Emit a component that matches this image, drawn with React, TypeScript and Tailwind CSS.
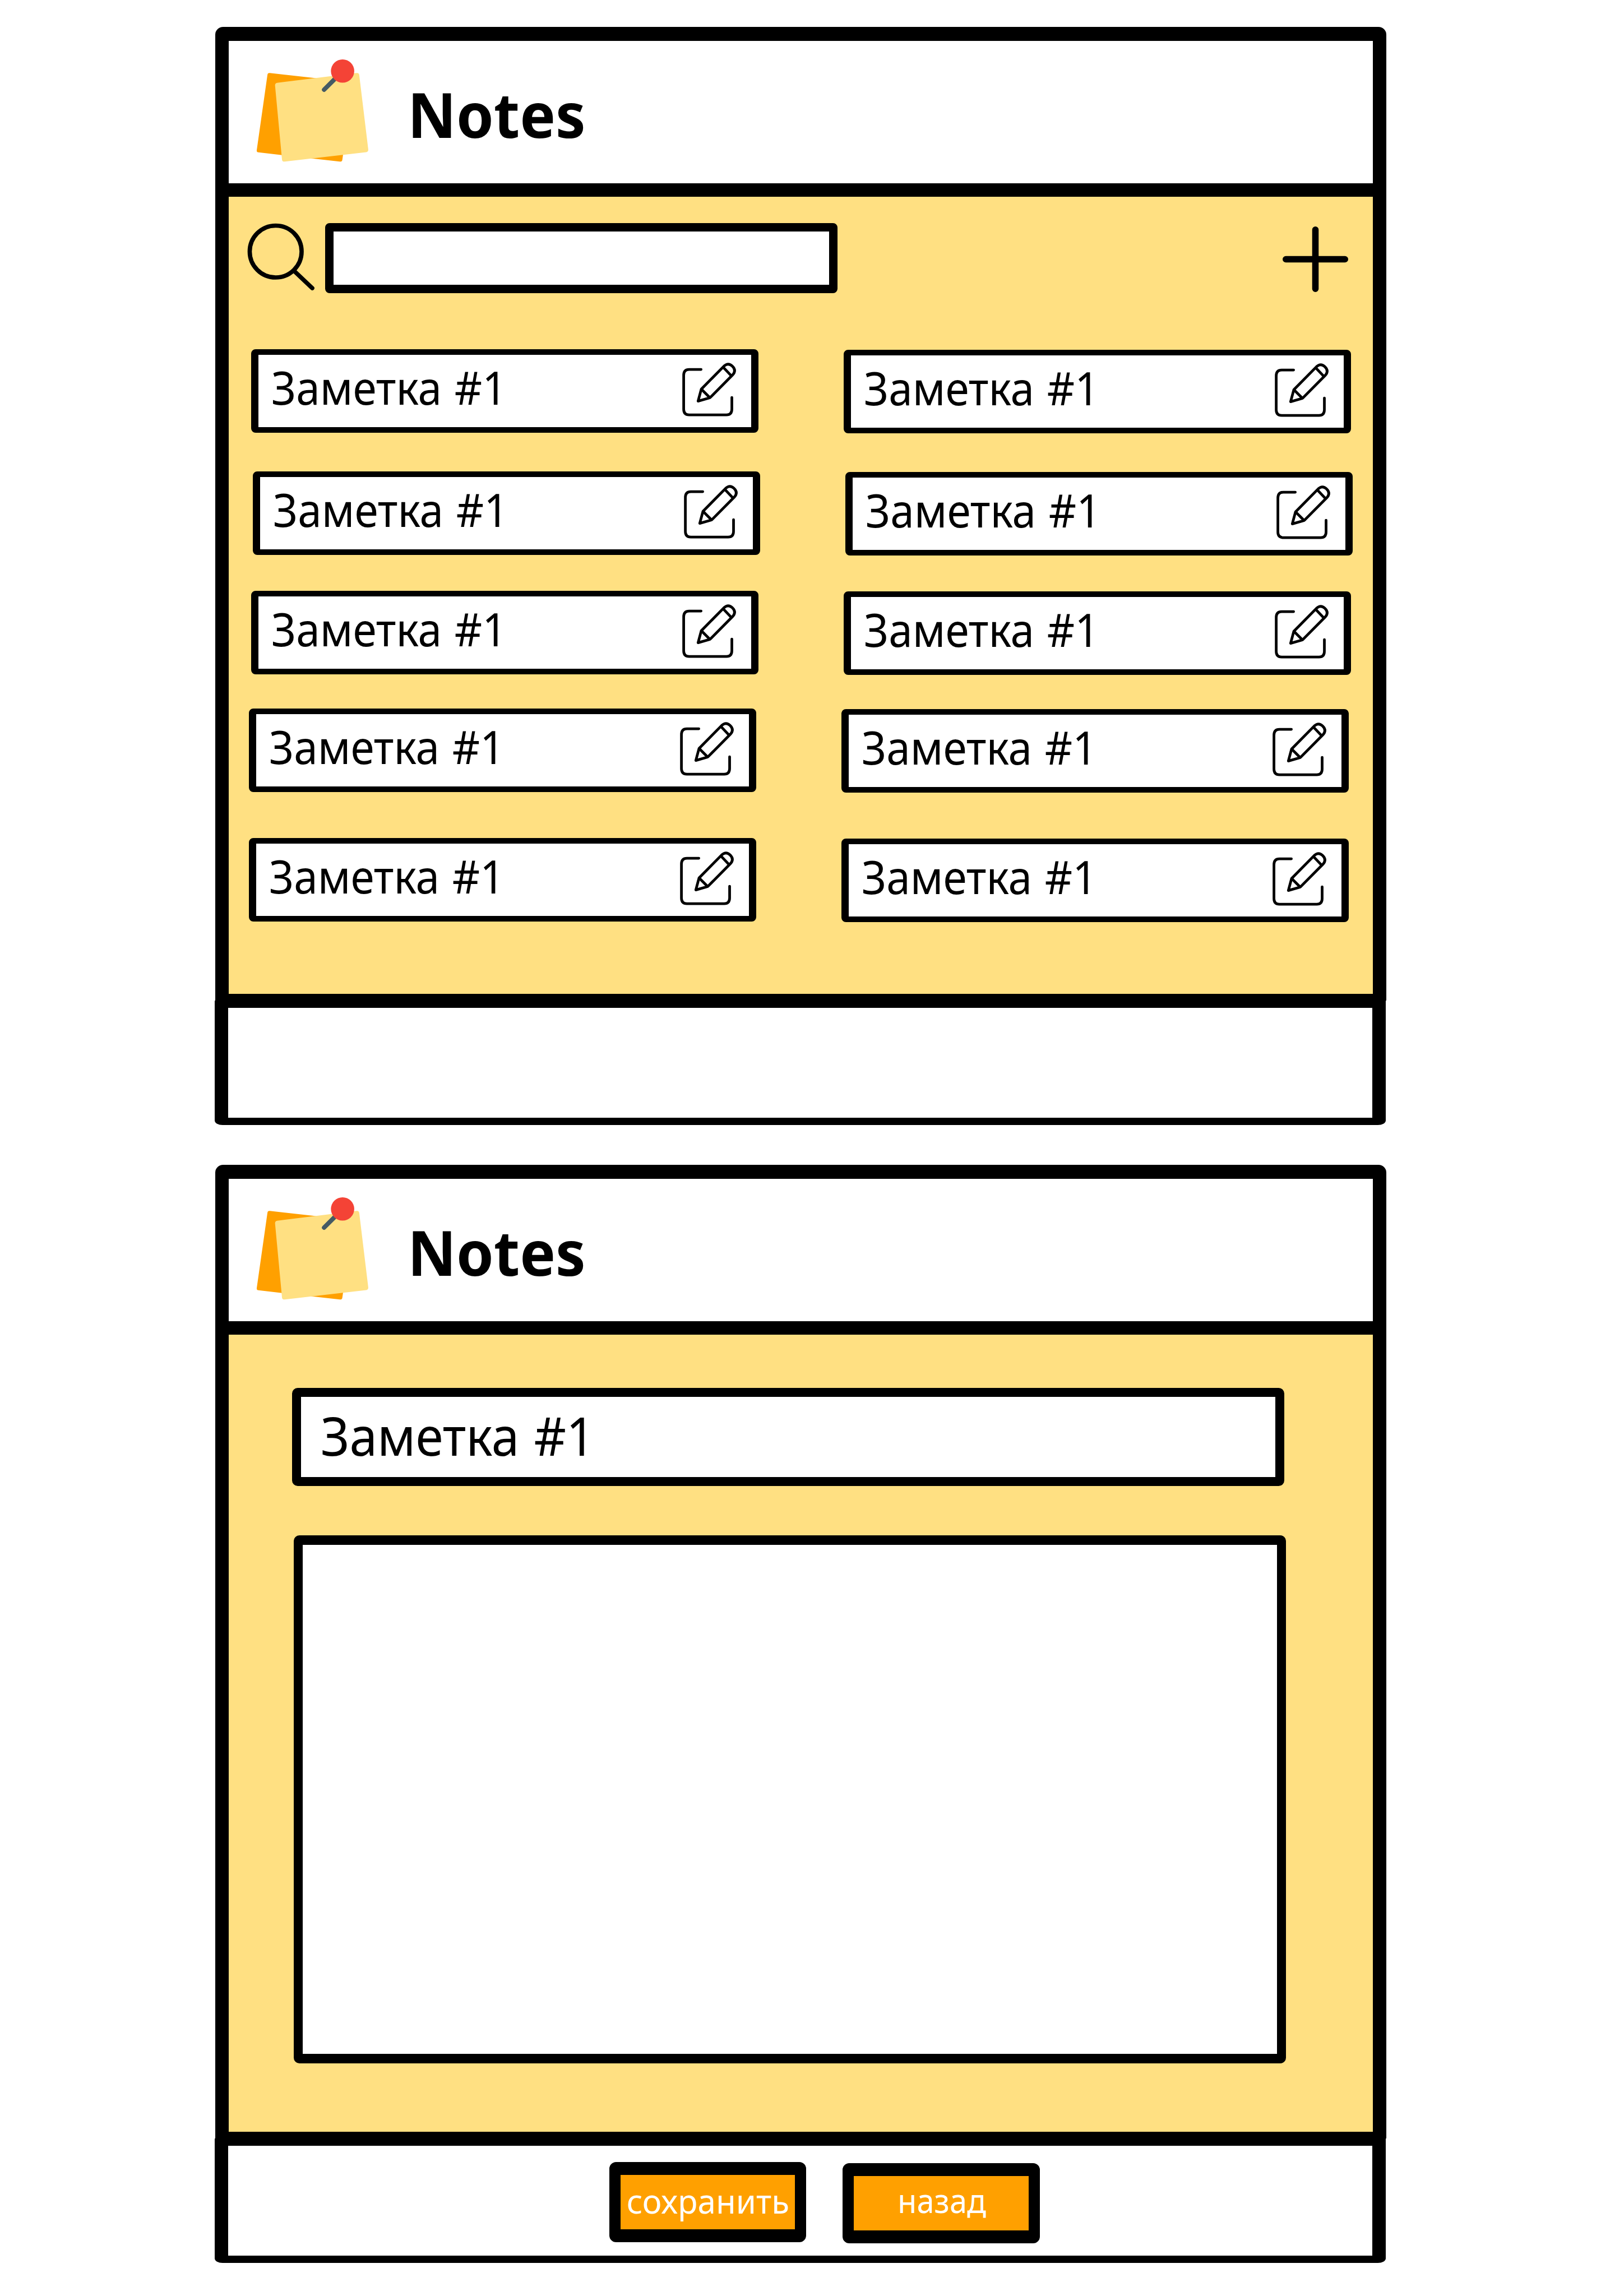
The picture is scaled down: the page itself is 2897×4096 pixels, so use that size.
import React from "react";

function NotesLogo() {
  return (
    <svg className="ml-[42px] mt-[26px] h-[198px] w-[215px] shrink-0" viewBox="0 0 260 240" aria-hidden="true">
      <path
        d="M38 38 Q33 37 32.500 42 L9.500 204 Q8.500 209 13 209.500 L189 229.500 Q194 230 194.500 225 L218 63 Q219 58 214 57.500 Z"
        fill="#ffa000"
      />
      <path
        d="M53.500 59 Q48.500 60 49 65 L64 225 Q64.500 230 70 229.500 L246 209 Q251 208 250.500 203 L231 42 Q230 37 225 38 Z"
        fill="#ffe082"
      />
      <path d="M184 45 L155 74" stroke="#455a64" strokeWidth="9.500" strokeLinecap="round" />
      <circle cx="195" cy="33.700" r="25.200" fill="#f44336" />
    </svg>
  );
}

function SearchIcon() {
  return (
    <svg className="h-[124px] w-[124px] shrink-0" viewBox="0 0 150 150" fill="none" stroke="#000" strokeLinecap="round" aria-hidden="true">
      <circle cx="65" cy="65" r="56" strokeWidth="9.200" />
      <path d="M106 108 L144 144" strokeWidth="9.200" />
    </svg>
  );
}

function PlusIcon() {
  return (
    <svg className="h-[117px] w-[117px] shrink-0" viewBox="0 0 142 142" stroke="#000" strokeWidth="14" strokeLinecap="round" aria-hidden="true">
      <path d="M71 7 V135 M7 71 H135" />
    </svg>
  );
}

function EditIcon() {
  return (
    <svg
      className="h-[107px] w-[107px] shrink-0"
      viewBox="0 0 130 130"
      fill="none"
      stroke="#000"
      strokeWidth="5.800"
      strokeLinecap="round"
      strokeLinejoin="round"
      aria-hidden="true"
    >
      <path d="M44.500 18.300 H18.600 Q6.800 18.300 6.800 31 V104.500 Q6.800 116.700 18.600 116.700 H99.500 Q111.200 116.700 111.200 104.500 V79" />
      <path d="M38 87 L45 61 L94.500 10.800 Q103.500 3 112 11 Q121.500 20 113.500 29.500 L64 79.500 Z" />
      <path d="M46 62 L63 79 M93 14 L110 32" />
    </svg>
  );
}

function Header() {
  return (
    <header className="flex h-[303px] items-start rounded-t-[14px] border-x-[24px] border-b-[24px] border-t-[25px] border-black bg-white">
      <NotesLogo />
      <h1 className="ml-[62px] mt-[74px] origin-left scale-x-[0.955] text-[112px] font-bold leading-none">Notes</h1>
    </header>
  );
}

function NoteCard() {
  return (
    <div className="flex h-[149px] w-[905px] items-start justify-between rounded-[8px] border-x-[13px] border-y-[10px] border-black bg-white">
      <span className="ml-[23px] mt-[16px] origin-left scale-x-[0.933] whitespace-nowrap text-[82px] leading-none [word-spacing:3px]">
        Заметка #1
      </span>
      <span className="mr-[19px] mt-[11px]">
        <EditIcon />
      </span>
    </div>
  );
}

const rows = [
  "mt-[101px] ml-[40px]",
  "mt-[68px] ml-[43px]",
  "mt-[63px] ml-[40px]",
  "mt-[60px] ml-[36px]",
  "mt-[81px] ml-[36px]",
];

function ListScreen() {
  return (
    <section className="w-[2089px]">
      <Header />
      <main className="h-[1434px] border-x-[24px] border-b-[12px] border-black bg-[#ffe082]">
        <div className="flex h-[171px] items-start pt-[44px]">
          <div className="ml-[30px]">
            <SearchIcon />
          </div>
          <div className="ml-[18px] mt-[3px] h-[125px] w-[914px] shrink-0 rounded-[8px] border-[15px] border-black bg-white" />
          <div className="ml-[794px] mt-[9px]">
            <PlusIcon />
          </div>
        </div>
        {rows.map((row) => (
          <div key={row} className={`${row} flex h-[150px] items-start gap-[152px]`}>
            <NoteCard />
            <div className="pt-px">
              <NoteCard />
            </div>
          </div>
        ))}
      </main>
      <footer className="-ml-px h-[222px] w-[2089px] border-x-[24px] border-b-[13px] border-t-[13px] border-black bg-white [border-bottom-left-radius:14px_8px] [border-bottom-right-radius:14px_8px]" />
    </section>
  );
}

function EditorScreen() {
  return (
    <section className="w-[2089px]">
      <Header />
      <main className="h-[1434px] border-x-[24px] border-b-[12px] border-black bg-[#ffe082] pt-[95px]">
        <div className="ml-[113px] h-[175px] w-[1770px] rounded-[10px] border-[16px] border-black bg-white">
          <span className="ml-[35px] mt-[21px] inline-block origin-left scale-x-[0.933] whitespace-nowrap text-[95.6px] leading-none [word-spacing:3px]">
            Заметка #1
          </span>
        </div>
        <div className="ml-[116px] mt-[88px] h-[942px] w-[1770px] rounded-[10px] border-x-[16px] border-y-[17px] border-black bg-white" />
      </main>
      <footer className="-ml-px flex h-[222px] w-[2089px] items-start gap-[65px] border-x-[24px] border-b-[13px] border-t-[13px] border-black bg-white pl-[680px] pt-[29px] [border-bottom-left-radius:14px_8px] [border-bottom-right-radius:14px_8px]">
        <button className="flex h-[143px] w-[351px] items-start justify-center rounded-[12px] border-x-[20px] border-y-[23px] border-black bg-[#ffa000] pt-[15px] text-[61px] leading-none text-white">
          <span className="shrink-0 scale-x-[0.956]">сохранить</span>
        </button>
        <button className="mt-[2px] flex h-[143px] w-[352px] items-start justify-center rounded-[12px] border-x-[20px] border-y-[23px] border-black bg-[#ffa000] pl-[3px] pt-[12px] text-[61px] leading-none text-white">
          <span className="shrink-0 scale-x-[0.918]">назад</span>
        </button>
      </footer>
    </section>
  );
}

export default function App() {
  return (
    <div className="flex h-[4096px] w-[2897px] flex-col gap-[71px] bg-white pl-[384px] pt-[48px] font-['Noto_Sans',sans-serif] text-black">
      <ListScreen />
      <EditorScreen />
    </div>
  );
}
